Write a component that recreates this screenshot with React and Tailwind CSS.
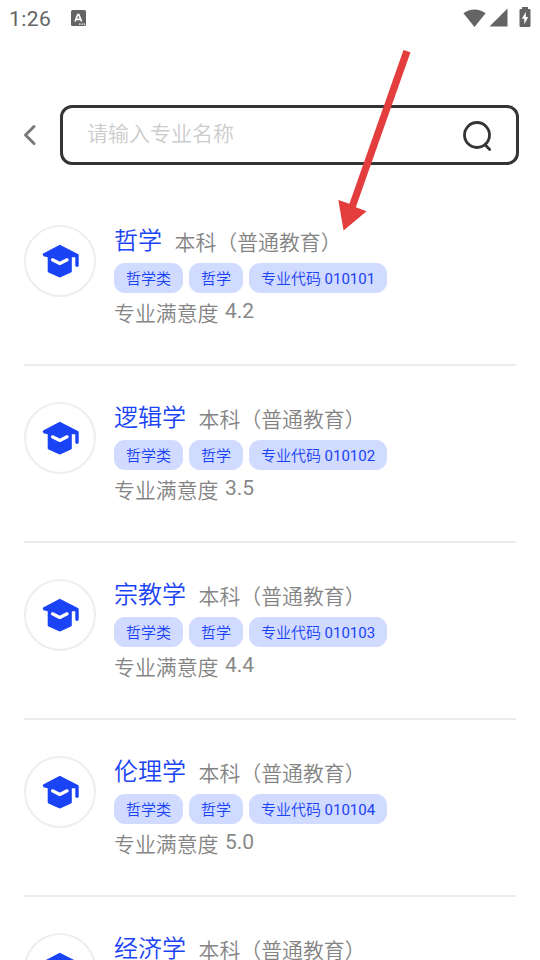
const majors = [
  { name: "哲学", code: "010101", score: "4.2" },
  { name: "逻辑学", code: "010102", score: "3.5" },
  { name: "宗教学", code: "010103", score: "4.4" },
  { name: "伦理学", code: "010104", score: "5.0" },
  { name: "经济学", code: "020101", score: "4.1" },
];

function StatusBar() {
  return (
    <div className="flex h-9 items-center pl-[9px] pr-[9.5px] text-[#646464]">
      <span className="w-[42px] font-[Roboto,sans-serif] text-[21px] font-[450] leading-9 tracking-[0.4px] pt-[2px]">1:26</span>
      <svg className="ml-[20px]" width="15" height="16" viewBox="0 0 15 16">
        <rect width="15" height="16" rx="1.5" fill="currentColor" />
        <path d="M4 11.5 6.8 4.5h1L10.6 11.5M5 9.4h4.6" fill="none" stroke="#fff" strokeWidth="1.7" />
        <path d="M8 14.200h1.400M10.400 14.200h1.400M12.700 14.200h1.400" stroke="#fff" strokeWidth="1.300" />
      </svg>
      <svg className="ml-auto" width="23" height="19" viewBox="0 0 23 19">
        <path d="M.4 4.2C6.5-.9 16.500-.9 22.600 4.200L11.500 18Z" fill="currentColor" />
      </svg>
      <svg className="-mt-px ml-[3px]" width="19" height="19" viewBox="0 0 19 19">
        <path d="M18.500.5V18.500H.5Z" fill="currentColor" />
      </svg>
      <svg className="-mt-[2px] ml-[11px]" width="12" height="20" viewBox="0 0 12 20">
        <path d="M3 0h6v2h1.500Q11.500 2 11.500 3.200V18.500Q11.500 20 10.300 20H1.700Q.5 20 .5 18.500V3.200Q.5 2 1.700 2H3Z" fill="currentColor" />
        <path d="M6.800 4.800 2.900 11.800H5.300V17.300L9.200 9.900H6.800Z" fill="#fff" />
      </svg>
    </div>
  );
}

function SearchBar() {
  return (
    <div className="mt-[69px] flex items-center pl-[22px] pr-[21px]">
      <svg width="15" height="22" viewBox="0 0 15 22" fill="none">
        <path d="M12 2.500 3.500 11 12 19.500" stroke="#77787a" strokeWidth="3" strokeLinecap="round" strokeLinejoin="round" />
      </svg>
      <div className="ml-[23px] flex h-[60px] flex-1 items-center justify-between rounded-[12px] border-3 border-[#333435] pl-[24px] pr-[24px]">
        <span className="text-[21px] leading-[30px] pb-[6px] text-[#cccccc]">请输入专业名称</span>
        <svg className="mt-[2px]" width="29" height="31" viewBox="0 0 29 31" fill="none" stroke="#333435" strokeWidth="2.800" strokeLinecap="round">
          <circle cx="14" cy="14" r="12.500" />
          <path d="m22.300 24 4.400 4.400" />
        </svg>
      </div>
    </div>
  );
}

function CapIcon() {
  return (
    <svg width="38" height="34" viewBox="0 0 38 34" fill="none">
      <path
        d="M17.800.8 1.200 9.400Q.4 9.900.9 11L1.500 12.300 5.700 13.200V27.200Q5.700 28 6.500 28.500L16.500 33.100Q17.800 33.700 19.100 33.100L29 28.500Q29.800 28 29.800 27.200V13.200H33.300V21.500Q33.300 22.900 35 22.900T36.700 21.500V11.200Q36.700 10.300 35.900 9.900Z"
        fill="#1a43f5"
      />
      <path d="m10.500 15.800 7.300 3.700 7.300-3.700" stroke="#fff" strokeWidth="3.200" strokeLinecap="round" strokeLinejoin="round" />
    </svg>
  );
}

function Tag({ children }) {
  return (
    <span className="flex h-[30px] rounded-[11px] bg-[#d1daff] px-3 text-[15px] leading-[30px] text-[#1a43f5]">
      {children}
    </span>
  );
}

function MajorItem({ major }) {
  return (
    <li className="flex h-[177px] border-b-2 border-[#ebebeb] pt-9">
      <div className="flex h-[72px] w-[72px] shrink-0 items-center justify-center rounded-full border-2 border-[#eeeeee] pl-[2px]">
        <CapIcon />
      </div>
      <div className="ml-[18px] whitespace-nowrap">
        <div className="flex h-[38px] items-start">
          <span className="text-[24px] leading-[28px] text-[#1a43f5]">{major.name}</span>
          <span className="ml-[12.5px] mt-px text-[20.9px] leading-[30px] text-[#848484]">本科（普通教育）</span>
        </div>
        <div className="flex gap-1.5">
          <Tag>哲学类</Tag>
          <Tag>哲学</Tag>
          <Tag>
            专业代码
            <span className="ml-[3.5px] font-[Roboto,sans-serif] font-normal leading-[32px]">{major.code}</span>
          </Tag>
        </div>
        <div className="mt-[4px] flex text-[20.9px] leading-[30px] text-[#848484]">
          <span>专业满意度</span>
          <span className="-mt-px ml-[6.5px] font-[Roboto,sans-serif] text-[21px] font-normal text-[#888888]">{major.score}</span>
        </div>
      </div>
    </li>
  );
}

export default function App() {
  return (
    <div className="h-[960px] w-[540px] overflow-hidden bg-white font-['Noto_Sans_CJK_SC',sans-serif] font-[350]">
      <StatusBar />
      <SearchBar />
      <ul className="mx-6 mt-6">
        {majors.map((m) => (
          <MajorItem key={m.name} major={m} />
        ))}
      </ul>
      <svg className="pointer-events-none absolute left-[336px] top-[48px]" width="76" height="184" viewBox="0 0 76 184">
        <path d="M67.500 2 74.500 4.300 19.800 159.200 30.600 163.300 7.600 182.600 2.300 152 13.400 155.700Z" fill="#e43d3e" />
      </svg>
    </div>
  );
}
